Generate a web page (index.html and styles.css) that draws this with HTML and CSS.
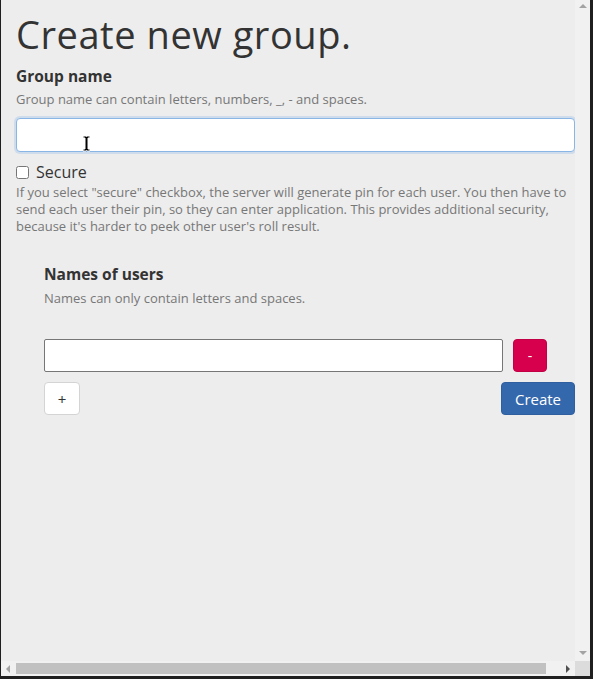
FILE: index.html
```html
<!DOCTYPE html>
<html lang="en">
<head>
<meta charset="utf-8">
<title>Create new group</title>
<link rel="stylesheet" href="styles.css">
</head>
<body>
<div class="window">
  <main class="content">
    <h1 class="title">Create new group.</h1>
    <label class="field-label" for="gname">Group name</label>
    <p class="hint">Group name can contain letters, numbers, _, - and spaces.</p>
    <div class="input-wrap">
      <input id="gname" class="text-input focused" type="text">
      <svg class="ibeam" width="9" height="17" viewBox="0 0 9 17"><path d="M1 1h3l0.5 0.5L5 1h3v2H6v11h2v2H5l-0.5-0.5L4 16H1v-2h2V3H1z" fill="#000" stroke="#fff" stroke-width="1"/></svg>
    </div>
    <label class="check-row"><input type="checkbox" class="check"><span>Secure</span></label>
    <p class="hint para">If you select "secure" checkbox, the server will generate pin for each user. You then have to send each user their pin, so they can enter application. This provides additional security, because it's harder to peek other user's roll result.</p>
    <section class="users">
      <h2 class="field-label">Names of users</h2>
      <p class="hint">Names can only contain letters and spaces.</p>
      <div class="user-row">
        <input class="user-input" type="text">
        <button class="btn btn-remove">-</button>
      </div>
    </section>
    <div class="actions">
      <button class="btn btn-add">+</button>
      <button class="btn btn-create">Create</button>
    </div>
  </main>
  <div class="vscroll">
    <span class="arrow up"></span>
    <span class="arrow down"></span>
  </div>
  <div class="hscroll">
    <span class="arrow left"></span>
    <span class="thumb"></span>
    <span class="arrow right"></span>
  </div>
  <div class="corner"></div>
</div>
</body>
</html>
```
FILE: styles.css
```css
* { box-sizing: border-box; }
html, body { margin: 0; padding: 0; }
body {
  background: #1f1f1f;
  width: 593px;
  height: 679px;
  overflow: hidden;
  font-family: "Open Sans", "Liberation Sans", sans-serif;
  color: #333;
}
.window {
  margin: 0 3px 3px 1px;
  width: 589px;
  height: 676px;
  display: grid;
  grid-template-columns: 574px 15px;
  grid-template-rows: 661px 15px;
}
.content {
  background: #ededed;
  padding: 10px 0 0 15px;
  overflow: hidden;
}
.title {
  margin: 0 0 8px;
  font-size: 38px;
  font-weight: 400;
  line-height: 48px;
  letter-spacing: 0.55px;
  color: #333;
}
.field-label {
  display: block;
  margin: 0;
  font-size: 15.5px;
  font-weight: 700;
  line-height: 20px;
  color: #333;
}
.hint {
  margin: 5px 0 0;
  font-size: 13px;
  line-height: 17px;
  color: #777;
}
.input-wrap { position: relative; margin-top: 10px; }
.text-input {
  display: block;
  width: 100%;
  height: 34px;
  border: 1px solid #8ab6e6;
  border-radius: 4px;
  background: #fff;
  box-shadow: 0 0 0 2px rgba(120, 170, 230, 0.25);
  outline: none;
}
.ibeam { position: absolute; left: 66px; top: 17px; }
.check-row {
  display: flex;
  align-items: center;
  gap: 7px;
  margin-top: 10px;
  font-size: 16px;
  line-height: 20px;
  color: #333;
}
.check {
  margin: 0;
  width: 13px;
  height: 13px;
}
.para { margin-top: 2px; padding-right: 8px; }
.users { padding: 29px 28px 0 28px; }
.users .hint { margin-top: 6px; }
.user-row {
  display: flex;
  gap: 10px;
  margin-top: 32px;
}
.user-input {
  flex: 1;
  height: 33px;
  border: 1px solid #767676;
  border-radius: 2px;
  background: #fff;
}
.btn {
  font-family: inherit;
  border-radius: 4px;
  cursor: pointer;
}
.btn-remove {
  width: 34px;
  height: 33px;
  border: 1px solid #c20045;
  background: #d6004c;
  color: #fff;
  font-size: 14px;
}
.actions {
  display: flex;
  justify-content: space-between;
  margin-top: 10px;
  padding-left: 28px;
}
.btn-add {
  width: 36px;
  height: 33px;
  border: 1px solid #d4d4d4;
  background: #fff;
  color: #333;
  font-size: 15px;
}
.btn-create {
  width: 74px;
  height: 33px;
  border: 1px solid #2f5f9f;
  background: #3468ad;
  color: #fff;
  font-size: 15px;
  padding: 0;
}
.vscroll {
  background: #f1f1f1;
  display: flex;
  flex-direction: column;
  justify-content: space-between;
  align-items: center;
  padding: 4px 0 6px;
}
.hscroll {
  background: #f1f1f1;
  display: flex;
  align-items: center;
  padding: 0 5px 0 5px;
}
.corner { background: #dcdcdc; }
.arrow { width: 0; height: 0; display: block; }
.up { border-left: 4px solid transparent; border-right: 4px solid transparent; border-bottom: 4px solid #a3a3a3; }
.down { border-left: 4px solid transparent; border-right: 4px solid transparent; border-top: 4px solid #a3a3a3; }
.left { border-top: 4px solid transparent; border-bottom: 4px solid transparent; border-right: 4px solid #a3a3a3; }
.right { border-top: 4px solid transparent; border-bottom: 4px solid transparent; border-left: 4px solid #505050; }
.thumb {
  display: block;
  margin: 0 20px 0 6px;
  width: 530px;
  height: 11px;
  background: #c1c1c1;
}
```
